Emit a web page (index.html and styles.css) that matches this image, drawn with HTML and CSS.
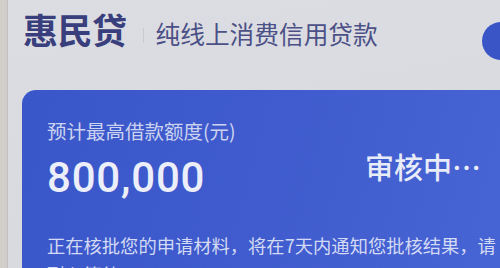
FILE: index.html
```html
<!DOCTYPE html>
<html lang="zh-CN">
<head>
<meta charset="utf-8">
<title>惠民贷</title>
<link rel="stylesheet" href="styles.css">
</head>
<body>
  <header class="header">
    <h1 class="brand">惠民贷</h1>
    <span class="divider"></span>
    <span class="slogan">纯线上消费信用贷款</span>
    <span class="dot"></span>
  </header>
  <section class="card">
    <div class="card-top">
      <div class="amount-col">
        <div class="label">预计最高借款额度(元)</div>
        <div class="amount">800,000</div>
      </div>
      <div class="status">审核中…</div>
    </div>
    <p class="notice">正在核批您的申请材料，将在7天内通知您批核结果，请耐心等待。</p>
  </section>
</body>
</html>
```

FILE: styles.css
```css
html, body {
  margin: 0;
  padding: 0;
}
body {
  width: 500px;
  height: 268px;
  overflow: hidden;
  font-family: "Noto Sans CJK SC", "Noto Sans", sans-serif;
  background:
    linear-gradient(to right, #d2cfcb 0, #d2cfcb 7px, #c2c1c2 7px, #c2c1c2 8px, transparent 8px),
    linear-gradient(170deg, #dcdde2 0%, #d8d9de 100%);
}
.header {
  display: flex;
  align-items: baseline;
  padding: 9px 0 0 23px;
  height: 40px;
}
.brand {
  margin: 0;
  font-size: 35px;
  line-height: 40px;
  font-weight: 700;
  color: #393e7c;
  letter-spacing: -0.5px;
}
.divider {
  align-self: flex-start;
  width: 1px;
  height: 15px;
  margin: 19px 12px 0 16px;
  background: #c9cacf;
}
.slogan {
  font-size: 24.7px;
  line-height: 30px;
  color: #4b5087;
}
.dot {
  align-self: flex-start;
  margin: 13px -20px 0 auto;
  width: 38px;
  height: 38px;
  border-radius: 50%;
  background: #3a55c6;
  flex: none;
}
.card {
  margin: 41px 0 0 22px;
  width: 500px;
  height: 200px;
  box-sizing: border-box;
  padding: 29px 0 0 25px;
  border-radius: 14px;
  background: linear-gradient(105deg, #3a57c9 0%, #3f5bcd 45%, #4865d5 100%);
  color: #fff;
}
.card-top {
  display: flex;
  width: 434px;
}
.amount-col {
  flex: 1;
}
.label {
  font-size: 19.5px;
  line-height: 24px;
  color: #ccd3f1;
}
.amount {
  margin-top: 10px;
  font-family: Roboto, "Noto Sans", sans-serif;
  font-weight: 500;
  font-size: 42px;
  line-height: 50px;
  letter-spacing: 0.8px;
  color: #eceff9;
}
.status {
  align-self: flex-start;
  margin: 30px 0 0 0;
  font-size: 29px;
  line-height: 34px;
  font-weight: 500;
  color: #e8ebf8;
}
.notice {
  margin: 28px 0 0 0;
  width: 453px;
  font-size: 18.3px;
  line-height: 29px;
  color: #d3daf4;
}
```
